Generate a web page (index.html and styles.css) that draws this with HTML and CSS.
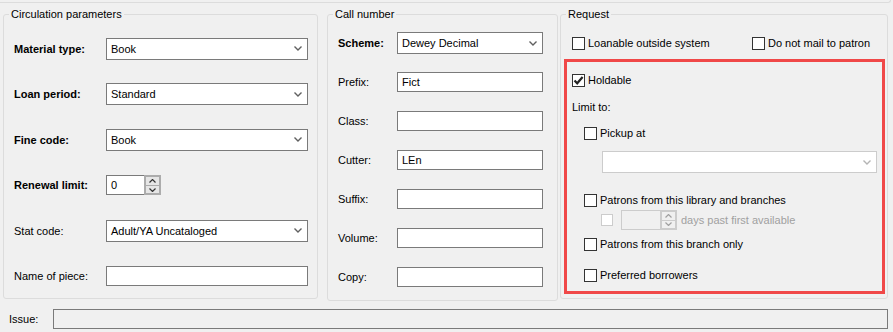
FILE: index.html
```html
<!DOCTYPE html>
<html lang="en">
<head>
    <meta charset="UTF-8">
    <title>Item record - Circulation</title>
    <link rel="stylesheet" href="styles.css">
</head>
<body>
    <div class="top-edge"></div>

    <div class="groups">
        <!-- Circulation parameters -->
        <fieldset class="group group-circ">
            <legend>Circulation parameters</legend>
            <div class="circ-body">
                <div class="row">
                    <label class="bold">Material type:</label>
                    <div class="select"><span>Book</span><svg class="arrow" width="8" height="5" viewBox="0 0 8 5"><polyline points="0.5,0.5 4,4 7.5,0.5" /></svg></div>
                </div>
                <div class="row">
                    <label class="bold">Loan period:</label>
                    <div class="select"><span>Standard</span><svg class="arrow" width="8" height="5" viewBox="0 0 8 5"><polyline points="0.5,0.5 4,4 7.5,0.5" /></svg></div>
                </div>
                <div class="row">
                    <label class="bold">Fine code:</label>
                    <div class="select"><span>Book</span><svg class="arrow" width="8" height="5" viewBox="0 0 8 5"><polyline points="0.5,0.5 4,4 7.5,0.5" /></svg></div>
                </div>
                <div class="row">
                    <label class="bold">Renewal limit:</label>
                    <div class="spin">
                        <div class="spin-input">0</div>
                        <div class="spin-btns">
                            <div class="spin-btn"><svg width="7" height="4" viewBox="0 0 7 4"><polyline points="0.5,3.5 3.5,0.5 6.5,3.5" /></svg></div>
                            <div class="spin-btn"><svg width="7" height="4" viewBox="0 0 7 4"><polyline points="0.5,0.5 3.5,3.5 6.5,0.5" /></svg></div>
                        </div>
                    </div>
                </div>
                <div class="row">
                    <label>Stat code:</label>
                    <div class="select"><span>Adult/YA Uncataloged</span><svg class="arrow" width="8" height="5" viewBox="0 0 8 5"><polyline points="0.5,0.5 4,4 7.5,0.5" /></svg></div>
                </div>
                <div class="row">
                    <label>Name of piece:</label>
                    <div class="text-input"></div>
                </div>
            </div>
        </fieldset>

        <!-- Call number -->
        <fieldset class="group group-call">
            <legend>Call number</legend>
            <div class="call-body">
                <div class="row">
                    <label class="bold">Scheme:</label>
                    <div class="select"><span>Dewey Decimal</span><svg class="arrow" width="8" height="5" viewBox="0 0 8 5"><polyline points="0.5,0.5 4,4 7.5,0.5" /></svg></div>
                </div>
                <div class="row">
                    <label>Prefix:</label>
                    <div class="text-input">Fict</div>
                </div>
                <div class="row">
                    <label>Class:</label>
                    <div class="text-input"></div>
                </div>
                <div class="row">
                    <label>Cutter:</label>
                    <div class="text-input">LEn</div>
                </div>
                <div class="row">
                    <label>Suffix:</label>
                    <div class="text-input"></div>
                </div>
                <div class="row">
                    <label>Volume:</label>
                    <div class="text-input"></div>
                </div>
                <div class="row">
                    <label>Copy:</label>
                    <div class="text-input"></div>
                </div>
            </div>
        </fieldset>

        <!-- Request -->
        <fieldset class="group group-request">
            <legend>Request</legend>
            <div class="request-body">
                <div class="check-row top-checks">
                    <div class="check-item loanable"><span class="checkbox"></span>Loanable outside system</div>
                    <div class="check-item"><span class="checkbox"></span>Do not mail to patron</div>
                </div>

                <div class="hold-box">
                    <div class="check-item holdable">
                        <span class="checkbox checked"><svg width="11" height="11" viewBox="0 0 11 11"><path d="M1.5 5.5 L4.2 8.3 L9.6 2" /></svg></span>Holdable
                    </div>
                    <div class="limit-label">Limit to:</div>
                    <div class="check-item indent pickup"><span class="checkbox"></span>Pickup at</div>
                    <div class="select disabled pickup-select"><span></span><svg class="arrow" width="8" height="5" viewBox="0 0 8 5"><polyline points="0.5,0.5 4,4 7.5,0.5" /></svg></div>
                    <div class="check-item indent lib-branches"><span class="checkbox"></span>Patrons from this library and branches</div>
                    <div class="days-row">
                        <span class="checkbox disabled-box"></span>
                        <div class="spin disabled-spin">
                            <div class="spin-input"></div>
                            <div class="spin-btns">
                                <div class="spin-btn"><svg width="7" height="4" viewBox="0 0 7 4"><polyline points="0.5,3.5 3.5,0.5 6.5,3.5" /></svg></div>
                                <div class="spin-btn"><svg width="7" height="4" viewBox="0 0 7 4"><polyline points="0.5,0.5 3.5,3.5 6.5,0.5" /></svg></div>
                            </div>
                        </div>
                        <span class="days-text">days past first available</span>
                    </div>
                    <div class="check-item indent branch-only"><span class="checkbox"></span>Patrons from this branch only</div>
                    <div class="check-item indent preferred"><span class="checkbox"></span>Preferred borrowers</div>
                </div>
            </div>
        </fieldset>
    </div>

    <div class="issue-row">
        <label>Issue:</label>
        <div class="issue-box"></div>
    </div>
</body>
</html>
```

FILE: styles.css
```css
* {
    margin: 0;
    padding: 0;
    box-sizing: border-box;
}

body {
    font-family: 'Liberation Sans', Arial, sans-serif;
    font-size: 11px;
    color: #000;
    background: #f0f0f0;
    width: 893px;
    height: 332px;
    overflow: hidden;
}

.top-edge {
    height: 3px;
    margin-right: 2px;
    border-bottom: 1px solid #dcdcdc;
    border-right: 1px solid #dcdcdc;
    border-bottom-right-radius: 3px;
}

.groups {
    display: flex;
    padding: 4px 0 0 3px;
    height: 297px;
}

.group {
    border: 1px solid #dcdcdc;
    border-radius: 3px;
    height: 292px;
    min-width: 0;
}

.group legend {
    margin-left: 5px;
    padding: 0 2px;
    line-height: 14px;
}

.group-circ {
    width: 315px;
    margin-right: 9px;
}

.group-call {
    width: 231px;
    height: 294px;
    margin-right: 2px;
}

.group-request {
    width: 328px;
}

.bold {
    font-weight: bold;
}

/* rows */
.circ-body {
    display: grid;
    grid-template-rows: repeat(6, 45.5px);
    padding: 5px 10px 0 10px;
}

.call-body {
    display: grid;
    grid-template-rows: repeat(7, 39px);
    padding: 2.5px 10px 0 10px;
}

.row {
    display: flex;
    align-items: center;
}

.circ-body .row label {
    width: 92px;
}

.circ-body .select,
.circ-body .text-input {
    width: 202px;
}

.call-body .row label {
    width: 59px;
}

.call-body .select,
.call-body .text-input {
    width: 146px;
}

/* controls */
.select {
    display: flex;
    align-items: center;
    justify-content: space-between;
    height: 22px;
    padding: 0 5px 0 4px;
    background: #fff;
    border: 1px solid #7a7a7a;
}

.select .arrow polyline {
    fill: none;
    stroke: #606060;
    stroke-width: 1.4;
}

.select.disabled {
    border-color: #cccccc;
}

.select.disabled .arrow polyline {
    stroke: #b4b4b4;
}

.text-input {
    height: 20px;
    line-height: 18px;
    padding-left: 4px;
    background: #fff;
    border: 1px solid #7a7a7a;
}

.spin {
    display: flex;
    height: 20px;
}

.spin-input {
    width: 38px;
    height: 20px;
    line-height: 18px;
    padding-left: 4px;
    background: #fff;
    border: 1px solid #7a7a7a;
    border-right: none;
}

.spin-btns {
    width: 17px;
    display: flex;
    flex-direction: column;
    border: 2px solid #acacac;
    background: #acacac;
    gap: 1px;
}

.spin-btn {
    flex: 1;
    background: #e6e6e6;
    display: flex;
    align-items: center;
    justify-content: center;
}

.spin-btn polyline {
    fill: none;
    stroke: #333;
    stroke-width: 1.2;
}

/* request group */
.request-body {
    padding: 14px 2px 0 3px;
}

.check-item {
    display: flex;
    align-items: center;
    height: 16px;
}

.checkbox {
    width: 13px;
    height: 13px;
    margin-right: 3px;
    border: 1px solid #333;
    background: #fff;
    display: flex;
    align-items: center;
    justify-content: center;
    flex-shrink: 0;
}

.checkbox.checked path {
    fill: none;
    stroke: #222;
    stroke-width: 2.2;
}

.top-checks {
    display: flex;
    padding-left: 8px;
}

.loanable {
    width: 180px;
}

.hold-box {
    margin-top: 8px;
    height: 235px;
    border: 3px solid #f04848;
    padding: 10px 5px 0 5px;
}

.limit-label {
    height: 16px;
    line-height: 16px;
    margin-top: 11px;
}

.indent {
    margin-left: 12px;
}

.pickup {
    margin-top: 10px;
}

.pickup-select {
    margin: 10px 0 0 30px;
}

.lib-branches {
    margin-top: 19px;
}

.days-row {
    display: flex;
    align-items: center;
    margin: 2px 0 0 29px;
    height: 20px;
}

.disabled-box {
    width: 12px;
    height: 12px;
    border-color: #cccccc;
    margin-right: 8px;
}

.disabled-spin .spin-input {
    width: 39px;
    border-color: #cccccc;
    background: #f0f0f0;
}

.disabled-spin .spin-btns {
    border-color: #cccccc;
    background: #cccccc;
}

.disabled-spin .spin-btn {
    background: #f0f0f0;
}

.disabled-spin .spin-btn polyline {
    stroke: #a0a0a0;
}

.days-text {
    margin-left: 4px;
    color: #a0a0a0;
}

.branch-only {
    margin-top: 6px;
}

.preferred {
    margin-top: 15px;
}

/* issue */
.issue-row {
    display: flex;
    align-items: center;
    margin-top: 9px;
    padding-left: 9px;
}

.issue-row label {
    width: 44px;
}

.issue-box {
    width: 835px;
    height: 20px;
    border: 1px solid #7a7a7a;
}
```
